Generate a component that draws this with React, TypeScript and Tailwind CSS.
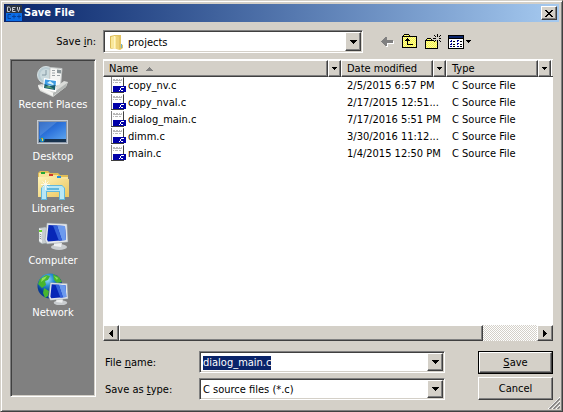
import { useEffect, useRef, type ReactNode } from "react";

const files = [
  { name: "copy_nv.c", date: "2/5/2015 6:57 PM" },
  { name: "copy_nval.c", date: "2/17/2015 12:51..." },
  { name: "dialog_main.c", date: "7/17/2016 5:51 PM" },
  { name: "dimm.c", date: "3/30/2016 11:12..." },
  { name: "main.c", date: "1/4/2015 12:50 PM" },
];

const raised =
  "border border-t-white border-l-white border-r-[#404040] border-b-[#404040] bg-[#d4d0c8] shadow-[inset_-1px_-1px_0_#808080]";
const sunken =
  "border border-t-[#808080] border-l-[#808080] border-r-white border-b-white shadow-[inset_1px_1px_0_#404040,inset_-1px_-1px_0_#d4d0c8]";

function Triangle({ d, w, h }: { d: string; w: number; h: number }) {
  return (
    <svg width={w} height={h} viewBox={`0 0 ${w} ${h}`} shapeRendering="crispEdges" aria-hidden="true">
      <path d={d} fill="#000" />
    </svg>
  );
}

const Down = () => <Triangle w={7} h={4} d="M0 0h7v1h-7zM1 1h5v1h-5zM2 2h3v1h-3zM3 3h1v1h-1z" />;
const SmallDown = () => <Triangle w={5} h={3} d="M0 0h5v1h-5zM1 1h3v1h-3zM2 2h1v1h-1z" />;
const Left = () => <Triangle w={4} h={7} d="M3 0h1v7h-1zM2 1h1v5h-1zM1 2h1v3h-1zM0 3h1v1h-1z" />;
const Right = () => <Triangle w={4} h={7} d="M0 0h1v7h-1zM1 1h1v5h-1zM2 2h1v3h-1zM3 3h1v1h-1z" />;

function AppIcon() {
  return (
    <svg width="16" height="16" viewBox="0 0 16 16" aria-hidden="true">
      <path fill="#2c3440" d="M0 0h16v16H0z" />
      <path fill="#0a6ce6" d="M0 8h16v8H0z" />
      <path fill="none" stroke="#c4c8d4" d="M1.500 2v4.500h2l1-1v-2l-1-1.500zM9.500 2.500h-3v4h3M6.500 4.500h2M11.500 2v2l1 2.500 1-2.500V2" />
      <path fill="none" stroke="#05409a" d="M5 9.500H2v4h3M6 11.500h4M8 9.500v4M11 11.500h4M13 9.500v4" />
    </svg>
  );
}

function FolderIcon() {
  return (
    <svg width="16" height="16" viewBox="0 0 16 16" aria-hidden="true">
      <path fill="#dcbc58" d="M1 2l5-1v13l-4 1-1-1z" />
      <path fill="#f9e79a" d="M2 3l3-1v12l-3 .5z" />
      <path fill="#e3c463" d="M6 1h6v9l2 1v3l-3 2-5-2z" />
      <path fill="#fbeaa0" d="M5 2l5 1v12.500l-5-1z" />
      <path fill="#edd27a" d="M7 2.500l3 .5v12.500l-3-.5z" />
      <path fill="#fff5c4" d="M5 2h1v12H5z" />
      <path fill="#6db0d4" d="M12 10h1v4h-1z" />
    </svg>
  );
}

function FileIcon() {
  return (
    <svg width="16" height="16" viewBox="0 0 16 16" shapeRendering="crispEdges" aria-hidden="true">
      <path fill="#808080" d="M0 0h13v16H0z" />
      <path fill="#fff" d="M1 0h11v15H1z" />
      <path fill="#b8b8b8" d="M2 2h2v1H2zM5 2h2v1H5zM8 2h1v1H8zM10 2h1v1h-1zM2 3h9v1H2zM2 5h1v1H2zM4 5h3v1H4zM8 5h2v1H8z" />
      <path fill="#404040" d="M0 15h13v1H0zM12 1h1v8h-1z" />
      <path fill="#0000a8" d="M2 9h13v6H2z" />
      <path fill="#fff" d="M8 13h1v1H8zM10 10h3v1h-3zM9 11h1v2H9zM10 13h2v1h-2z" />
    </svg>
  );
}

function BackIcon() {
  return (
    <svg width="16" height="16" viewBox="0 0 16 16" shapeRendering="crispEdges" aria-hidden="true">
      <path fill="#fff" d="M3 9h1v1h1v1h1v1h1v1h2v-3h6V7h-1v2H8v2H7v-1H4z" />
      <path fill="#808080" d="M2 7h1V6h1V5h1V4h1V3h2v3h6v3H8v3H6v-1H5v-1H4V9H3V8H2z" />
    </svg>
  );
}

function Dither({ id }: { id: string }) {
  return (
    <pattern id={id} width="2" height="2" patternUnits="userSpaceOnUse">
      <path fill="#ffff38" d="M0 0h2v2H0z" />
      <path fill="#f4f0b0" d="M0 0h1v1H0zM1 1h1v1H1z" />
    </pattern>
  );
}

function UpIcon() {
  return (
    <svg width="16" height="16" viewBox="0 0 16 16" shapeRendering="crispEdges" aria-hidden="true">
      <defs><Dither id="up-fill" /></defs>
      <path fill="#000" d="M2 1h5v1h1v1h7v12H0V3h1V2h1z" transform="translate(0 -1)" />
      <path fill="url(#up-fill)" d="M2 1h5v1H2zM1 3h13v10H1z" />
      <path fill="#000" d="M5 4h1v1h1v1h1v1H6v3h5v1H5V7H3V6h1V5h1z" />
    </svg>
  );
}

function NewFolderIcon() {
  return (
    <svg width="16" height="16" viewBox="0 0 16 16" shapeRendering="crispEdges" aria-hidden="true">
      <defs><Dither id="new-fill" /></defs>
      <path fill="#000" d="M2 4h4v1h1v1h6v9H0V6h1V5h1z" />
      <path fill="url(#new-fill)" d="M2 5h4v1H2zM1 7h11v7H1z" />
      <path fill="#d4d0c8" d="M9 4h6v4H9z" />
      <path fill="url(#new-fill)" d="M8 7h3v2H8z" />
      <path fill="#000" d="M12 0h1v3h-1zM12 6h1v3h-1zM8 4h3v1H8zM14 4h2v1h-2zM9 1h1v1H9zM10 2h1v1h-1zM15 1h1v1h-1zM14 2h1v1h-1zM14 6h1v1h-1zM15 7h1v1h-1zM10 6h1v1h-1zM9 7h1v1H9z" />
    </svg>
  );
}

function ViewsIcon() {
  return (
    <svg width="16" height="16" viewBox="0 0 16 16" shapeRendering="crispEdges" aria-hidden="true">
      <path fill="#000" d="M0 1h16v14H0z" />
      <path fill="#0a246a" d="M1 2h14v2H1z" />
      <path fill="#fff" d="M1 5h14v9H1z" />
      <path fill="#000090" d="M3 6h1v2H3zM2 7h1v1H2zM9 6h2v1H9zM9 7h1v1H9zM3 9h1v2H3zM2 10h1v1H2zM9 9h2v1H9zM9 10h1v1H9zM3 12h1v1H3zM2 12h1v1H2zM9 12h2v1H9z" />
      <path fill="#000" d="M5 7h2v1H5zM12 7h2v1h-2zM5 10h2v1H5zM12 10h2v1h-2zM5 12h2v1H5zM12 12h2v1h-2z" />
    </svg>
  );
}

function RecentIcon() {
  return (
    <svg width="32" height="32" viewBox="0 0 32 32" aria-hidden="true">
      <path fill="#626262" opacity=".6" d="M2 24l14 8 14-10-3-3z" />
      <circle cx="9" cy="10" r="8.500" fill="#b8cbd2" stroke="#d6e0e2" />
      <circle cx="9" cy="10" r="6" fill="#cbdade" />
      <path fill="none" stroke="#8499a4" d="M9 5v5H5" />
      <path fill="#f5f6f4" stroke="#c0c4c4" d="M13 2.500l12 1-1.500 18-11-2z" />
      <path stroke="#9ba2a5" d="M15 5.500h3M15 8h3M15 10.500h3M20 10.500h3" />
      <path fill="#8b9699" d="M20 4.500l4 .5v3.500l-4-.5z" />
      <path fill="#d9dbd8" d="M1 20l4-1 10 6 12-9 4 1-2 5-13 10L3 26z" />
      <path fill="#f4f4f1" d="M1 20l15 8v3L2 24z" />
      <path fill="#b3b7b5" d="M16 28l14-10-1 4-13 9z" />
      <path fill="#fff" d="M7 13l13 2-1 12-13-3z" />
      <path fill="#3b9ae3" d="M8 14.500l11 1.500-.5 5-11-1z" />
      <path fill="#d4f1fb" d="M10 18l3-2 4 3-1 1z" />
      <path fill="#175a6d" d="M7.500 19l5 2 6-1-.5 5-11-2z" />
      <path fill="#67a875" d="M7 22l5-1 5 3z" />
    </svg>
  );
}

function DesktopIcon() {
  return (
    <svg width="32" height="32" viewBox="0 0 32 32" aria-hidden="true">
      <defs>
        <linearGradient id="desk" x1="0" y1="0" x2="1" y2="1">
          <stop offset="0" stopColor="#164fb2" />
          <stop offset=".5" stopColor="#2f75dc" />
          <stop offset="1" stopColor="#5ba3ee" />
        </linearGradient>
      </defs>
      <path fill="#c4cad1" d="M0 3h31v24H0z" />
      <path fill="#8c98a8" d="M1 4h29v22H1z" />
      <path fill="url(#desk)" d="M2 5h27v17H2z" />
      <path fill="#8bbaf0" opacity=".3" d="M2 5h18L3 19z" />
      <path fill="#17324e" d="M2 22h27v3H2z" />
      <circle cx="5" cy="22.500" r="2.500" fill="#1c8cc2" />
      <path fill="#f26a2b" d="M4 21h1v1H4z" />
      <path fill="#9bd53e" d="M5 21h1v1H5z" />
      <path fill="#ffd93b" d="M5 22h1v2H5z" />
    </svg>
  );
}

function LibrariesIcon() {
  return (
    <svg width="32" height="32" viewBox="0 0 32 32" aria-hidden="true">
      <defs>
        <linearGradient id="lib" x1="0" y1="0" x2="1" y2="1">
          <stop offset="0" stopColor="#fff3b8" />
          <stop offset="1" stopColor="#ebc65e" />
        </linearGradient>
      </defs>
      <path fill="#e0bc55" d="M3 2h8l2 2h8l2 2h8v21H1V4z" />
      <path fill="#f8e49b" d="M2 4h10v22H2zM11 6h10v20H11zM20 8h11v19H20z" />
      <path fill="url(#lib)" d="M1 8h17l2 2h12v18H1z" />
      <path fill="#22a735" d="M4 3h4v2H4z" />
      <path fill="#d0392b" d="M12 5h4v2h-4z" />
      <path fill="#258fe0" d="M20 7h4v2h-4z" />
      <path fill="#62b8dc" d="M4 19l3-3h18l3 3v12h-6v-8H10v8H4z" />
      <path fill="#b8e7f5" d="M5 19l2-2h18l2 2v11h-4v-8H9v8H5z" />
      <path fill="#62b8dc" d="M10 19h12v2H10z" />
      <path stroke="#fff" d="M8.500 11v10M4 15.500h9M5.500 12.500l6 6M11.500 12.500l-6 6" opacity=".75" />
    </svg>
  );
}

function Monitor() {
  return (
    <>
      <ellipse cx="22" cy="26" rx="8" ry="3" fill="#c9cdd0" />
      <path fill="#eef0f1" d="M17 20l8 2-1 4-7-1z" />
      <path fill="#e4e7ea" stroke="#8f999f" strokeWidth=".5" d="M10 2l20 1 1 18-21 2-2-4z" />
      <path fill="#0727b7" d="M11.500 4L28 5l1 14-18 1.500-1-2z" />
      <path fill="#6c9aee" d="M20 4.500l8 .5 1 14-4 .5z" />
      <path fill="#3361d9" d="M16 4.500l4 .1 5 15-3 .4z" />
    </>
  );
}

function ComputerIcon() {
  return (
    <svg width="32" height="32" viewBox="0 0 32 32" aria-hidden="true">
      <path fill="#c8ced0" stroke="#848e90" strokeWidth=".5" d="M2 7l6-1 3 1v15l-6 1-3-2z" />
      <path fill="#edf0f0" d="M2 7l3 2v13l-3-2z" />
      <path stroke="#6f777a" strokeWidth=".7" d="M2.500 13l2 1M2.500 15l2 1M2.500 17l2 1" />
      <path fill="#67d52a" d="M2 9h3v2H2z" />
      <Monitor />
    </svg>
  );
}

function NetworkIcon() {
  return (
    <svg width="32" height="32" viewBox="0 0 32 32" aria-hidden="true">
      <defs>
        <radialGradient id="globe" cx=".4" cy=".25">
          <stop offset="0" stopColor="#9bdef5" />
          <stop offset=".5" stopColor="#268bd2" />
          <stop offset="1" stopColor="#073b94" />
        </radialGradient>
      </defs>
      <circle cx="13" cy="13" r="12.500" fill="url(#globe)" />
      <path fill="#47b52e" d="M3 6l6-4 4 1-2 4-3 1 1 4-4 3-4-4zM16 1l6 3 3 5-5 1-3-3zM7 15l5 3-1 5-3 2-2-5z" />
      <path fill="#92df60" d="M5 5l5-2-2 3-4 3zM17 3l4 2-1 2z" />
      <g transform="translate(5 8) scale(.84)"><Monitor /></g>
    </svg>
  );
}

const places = [
  { label: "Recent Places", icon: <RecentIcon /> },
  { label: "Desktop", icon: <DesktopIcon /> },
  { label: "Libraries", icon: <LibrariesIcon /> },
  { label: "Computer", icon: <ComputerIcon /> },
  { label: "Network", icon: <NetworkIcon /> },
];

function HeaderCell({ label, children }: { label: string; children?: ReactNode }) {
  return (
    <th className="p-0 font-normal" scope="col">
      <div className="flex h-[17px]">
        <button className={`flex min-w-0 flex-1 items-center gap-2 pt-[2px] pl-[5px] text-left ${raised}`}>
          {label}
          {children}
        </button>
        <button aria-label={`Filter ${label}`} className={`flex w-[13px] items-center justify-center ${raised}`}>
          <SmallDown />
        </button>
      </div>
    </th>
  );
}

function DropArrow() {
  return (
    <span className={`pointer-events-none flex w-4 shrink-0 items-center justify-center ${raised}`}>
      <Down />
    </span>
  );
}

export default function App() {
  const nameRef = useRef<HTMLInputElement>(null);

  useEffect(() => {
    nameRef.current?.focus();
    nameRef.current?.select();
  }, []);

  return (
    <div className="relative flex min-h-screen flex-col border border-t-[#d4d0c8] border-l-[#d4d0c8] border-r-[#404040] border-b-[#404040] bg-[#d4d0c8] p-[3px] font-['DejaVu_Sans_Condensed','DejaVu_Sans',sans-serif] text-[11px] leading-[14px] text-black shadow-[inset_1px_1px_0_#fff,inset_-1px_-1px_0_#808080]">
      <header className="flex h-[18px] shrink-0 items-center gap-[2px] bg-linear-to-r from-[#0a246a] to-[#a6caf0] px-[2px] text-white">
        <AppIcon />
        <h1 className="flex-1 text-[11px] font-bold">Save File</h1>
        <button aria-label="Close" className={`flex h-[14px] w-4 items-center justify-center ${raised}`}>
          <svg width="8" height="7" viewBox="0 0 8 7" shapeRendering="crispEdges" aria-hidden="true">
            <path fill="#000" d="M0 0h2v1h1v1h2V1h1V0h2v1H7v1H6v1H5v1h1v1h1v1h1v1H6V6H5V5H3v1H2v1H0V6h1V5h1V4h1V3H2V2H1V1H0z" />
          </svg>
        </button>
      </header>

      <main className="flex flex-1 flex-col gap-[6px] px-[6px] pt-2 pb-2">
        <div className="flex items-center">
          <label htmlFor="folder" className="w-[93px] shrink-0 pr-[7px] text-right">
            Save <u>i</u>n:
          </label>
          <div className="flex min-w-0 flex-1 items-center">
            <div className={`flex h-[23px] min-w-0 flex-1 items-stretch bg-white p-[1px] ${sunken}`}>
              <span className="flex items-center pl-1">
                <FolderIcon />
              </span>
              <select id="folder" className="min-w-0 flex-1 appearance-none bg-transparent pt-[2px] pl-[3px] outline-none">
                <option>projects</option>
              </select>
              <DropArrow />
            </div>
            <div className="flex w-[190px] shrink-0 items-center gap-[7px] pl-4">
              <button aria-label="Back"><BackIcon /></button>
              <button aria-label="Up one level"><UpIcon /></button>
              <button aria-label="New folder"><NewFolderIcon /></button>
              <button aria-label="Views" className="flex items-center gap-[2px]">
                <ViewsIcon />
                <SmallDown />
              </button>
            </div>
          </div>
        </div>

        <div className="flex flex-1 gap-[7px]">
          <nav className={`mb-[3px] w-[86px] shrink-0 bg-[#808080] pt-[5px] ${sunken}`}>
            {places.map(({ label, icon }) => (
              <button key={label} className="flex h-[52px] w-full flex-col items-center gap-[1px] whitespace-nowrap text-white">
                {icon}
                {label}
              </button>
            ))}
          </nav>

          <div className="flex min-w-0 flex-1 flex-col gap-[10px]">
            <section className="flex flex-1 flex-col bg-white">
              <div className="flex-1">
                <table className="w-full table-fixed border-collapse">
                  <colgroup>
                    <col />
                    <col className="w-[105px]" />
                    <col className="w-[105px]" />
                    <col className="w-[2px]" />
                  </colgroup>
                  <thead>
                    <tr>
                      <HeaderCell label="Name">
                        <svg width="7" height="4" viewBox="0 0 7 4" shapeRendering="crispEdges" aria-hidden="true">
                          <path fill="#808080" d="M3 0h1v1h1v1h1v1h1v1H0V3h1V2h1V1h1z" />
                        </svg>
                      </HeaderCell>
                      <HeaderCell label="Date modified" />
                      <HeaderCell label="Type" />
                      <td className="border border-t-white border-r-0 border-l-white border-b-[#404040] bg-[#d4d0c8] p-0" />
                    </tr>
                  </thead>
                  <tbody>
                    {files.map(({ name, date }) => (
                      <tr key={name} className="h-[17px] whitespace-nowrap">
                        <td className="p-0 pl-2">
                          <span className="flex items-center gap-[1px]">
                            <FileIcon />
                            <span className="pt-[2px]">{name}</span>
                          </span>
                        </td>
                        <td className="p-0 pt-[2px] pl-[6px]">{date}</td>
                        <td className="p-0 pt-[2px] pl-[6px]">C Source File</td>
                        <td className="p-0" />
                      </tr>
                    ))}
                  </tbody>
                </table>
              </div>
              <div className="flex h-4 bg-[#d4d0c8] bg-[repeating-conic-gradient(#fff_0_25%,#d4d0c8_0_50%)] bg-size-[2px_2px]">
                <button aria-label="Scroll left" className={`flex w-4 items-center justify-center ${raised}`}>
                  <Left />
                </button>
                <div className="flex flex-1">
                  <div className={`w-[87%] ${raised}`} />
                </div>
                <button aria-label="Scroll right" className={`flex w-4 items-center justify-center ${raised}`}>
                  <Right />
                </button>
              </div>
            </section>

            <form className="flex gap-[33px]" onSubmit={(e) => e.preventDefault()}>
              <div className="flex min-w-0 flex-1 flex-col gap-[5px]">
                <div className="flex items-center">
                  <label htmlFor="file-name" className="w-24 shrink-0 pt-[2px] pl-[2px]">
                    File <u>n</u>ame:
                  </label>
                  <div className={`flex h-[22px] min-w-0 flex-1 items-stretch bg-white p-[1px] ${sunken}`}>
                    <input
                      id="file-name"
                      ref={nameRef}
                      defaultValue="dialog_main.c"
                      className="min-w-0 flex-1 bg-transparent pt-[2px] pl-[2px] outline-none selection:bg-[#0a246a] selection:text-white"
                    />
                    <DropArrow />
                  </div>
                </div>
                <div className="flex items-center">
                  <label htmlFor="file-type" className="w-24 shrink-0 pt-[2px] pl-[2px]">
                    Save as <u>t</u>ype:
                  </label>
                  <div className={`flex h-[22px] min-w-0 flex-1 items-stretch bg-white p-[1px] ${sunken}`}>
                    <select id="file-type" className="min-w-0 flex-1 appearance-none bg-transparent pt-[2px] pl-[2px] outline-none">
                      <option>C source files (*.c)</option>
                    </select>
                    <DropArrow />
                  </div>
                </div>
              </div>
              <div className="flex w-[75px] shrink-0 flex-col gap-[3px]">
                <button type="submit" className="flex h-[23px] border border-black">
                  <span className={`flex h-full w-full items-center justify-center ${raised}`}>
                    <span><u>S</u>ave</span>
                  </span>
                </button>
                <button type="button" className={`h-[23px] ${raised}`}>Cancel</button>
              </div>
            </form>
          </div>
        </div>
      </main>

      <svg className="absolute right-[2px] bottom-[2px]" width="12" height="12" viewBox="0 0 12 12" aria-hidden="true">
        <path stroke="#fff" d="M0 12L12 0M4 12l8-8M8 12l4-4" />
        <path stroke="#808080" strokeWidth="1.500" d="M1.500 12L12 1.500M5.500 12L12 5.500M9.500 12L12 9.500" />
      </svg>
    </div>
  );
}
